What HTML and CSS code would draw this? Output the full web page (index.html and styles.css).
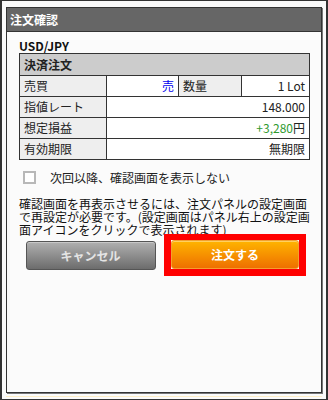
FILE: index.html
```html
<!DOCTYPE html>
<html lang="ja">
<head>
<meta charset="utf-8">
<title>注文確認</title>
<link rel="stylesheet" href="styles.css">
</head>
<body>
<div class="frame">
  <div class="panel">
    <div class="titlebar">注文確認</div>
    <div class="content">
      <div class="pair">USD/JPY</div>
      <table class="order">
        <colgroup><col class="c1"><col class="c2"><col class="c3"><col class="c4"></colgroup>
        <tr class="head"><th colspan="4">決済注文</th></tr>
        <tr><td class="lbl">売買</td><td class="val sell">売</td><td class="lbl">数量</td><td class="val">1 Lot</td></tr>
        <tr><td class="lbl">指値レート</td><td class="val" colspan="3">148.000</td></tr>
        <tr><td class="lbl">想定損益</td><td class="val" colspan="3"><span class="plus">+3,280</span>円</td></tr>
        <tr><td class="lbl">有効期限</td><td class="val" colspan="3">無期限</td></tr>
      </table>
      <label class="check"><span class="box"></span><span>次回以降、確認画面を表示しない</span></label>
      <p class="note">確認画面を再表示させるには、注文パネルの設定画面<br>で再設定が必要です。(設定画面はパネル右上の設定画<br>面アイコンをクリックで表示されます)</p>
      <div class="buttons">
        <div class="slot"><button class="btn cancel">キャンセル</button></div>
        <div class="slot"><div class="highlight"><button class="btn submit">注文する</button></div></div>
      </div>
    </div>
  </div>
</div>
</body>
</html>
```

FILE: styles.css
```css
* { box-sizing: border-box; }
html, body {
  margin: 0;
  padding: 0;
  width: 328px;
  height: 400px;
  background: #fafafa;
}
body {
  font-family: "Noto Sans CJK JP", "Noto Sans", sans-serif;
  font-size: 12px;
  color: #222;
}
.frame {
  width: 328px;
  height: 400px;
  border-style: solid;
  border-color: #333;
  border-width: 1px 2px 1px 2px;
  padding: 6px 4px 6px 4px;
}
.panel {
  height: 386px;
  width: 316px;
  border: 1px solid #333;
  background: #fbfbfb;
  box-shadow: 1px 1px 0 #777, 0 3px 0 #fbfbfb, 0 4px 0 #fff0c8;
}
.titlebar {
  height: 24px;
  background: #666;
  border-bottom: 1px solid #333;
  color: #fff;
  font-weight: bold;
  font-size: 12px;
  line-height: 23px;
  padding-left: 3px;
}
.content {
  padding: 6px 12px 0 12px;
}
.pair {
  font-weight: bold;
  font-size: 12px;
  line-height: 15px;
  height: 15px;
  color: #111;
}
.order {
  width: 290px;
  table-layout: fixed;
  border-collapse: collapse;
  border: 1px solid #333;
}
.c1 { width: 87px; }
.c2 { width: 72px; }
.c3 { width: 63px; }
.c4 { width: 68px; }
.order th,
.order td {
  border: 1px solid #333;
  font-size: 12px;
  line-height: 14px;
  padding: 0 4px;
  white-space: nowrap;
}
.order th {
  height: 22px;
  background: #ccc;
  text-align: left;
  font-weight: bold;
}
.order td { height: 21px; }
.lbl {
  background: #eee;
  text-align: left;
}
.val {
  background: #fff;
  text-align: right;
  padding-right: 5px;
}
.sell { color: #0000ee; }
.plus { color: #2f9a2f; }
.check {
  display: flex;
  align-items: center;
  margin-top: 11px;
  height: 13px;
  padding-left: 4px;
  gap: 14px;
  color: #222;
}
.box {
  width: 13px;
  height: 13px;
  border: 2px solid #b8b8b8;
  background: #fff;
  flex: none;
}
.note {
  margin: 13px 0 0 0;
  line-height: 13px;
  white-space: nowrap;
  color: #111;
}
.buttons {
  display: grid;
  grid-template-columns: 145px 145px;
  margin-top: -2px;
}
.slot {
  display: flex;
  justify-content: center;
}
.highlight {
  border-style: solid;
  border-color: #ff0000;
  border-width: 6px 7px 7px 7px;
  margin-right: 3px;
}
.btn {
  font-family: inherit;
  font-size: 12px;
  font-weight: bold;
  height: 29px;
  border-radius: 3px;
  padding: 0;
  margin: 0;
}
.cancel {
  width: 130px;
  margin-top: 7px;
  margin-right: 2px;
  background: linear-gradient(#b0b0b0, #6c6c6c);
  border: 1px solid #555;
  color: #e4e4e4;
  box-shadow: inset 0 1px 0 #c8c8c8;
}
.submit {
  width: 128px;
  display: block;
  background: linear-gradient(#ffb400, #ee7000);
  border: 1px solid #f3a030;
  color: #fff;
  box-shadow: inset 0 1px 0 #ffd060;
}
```
